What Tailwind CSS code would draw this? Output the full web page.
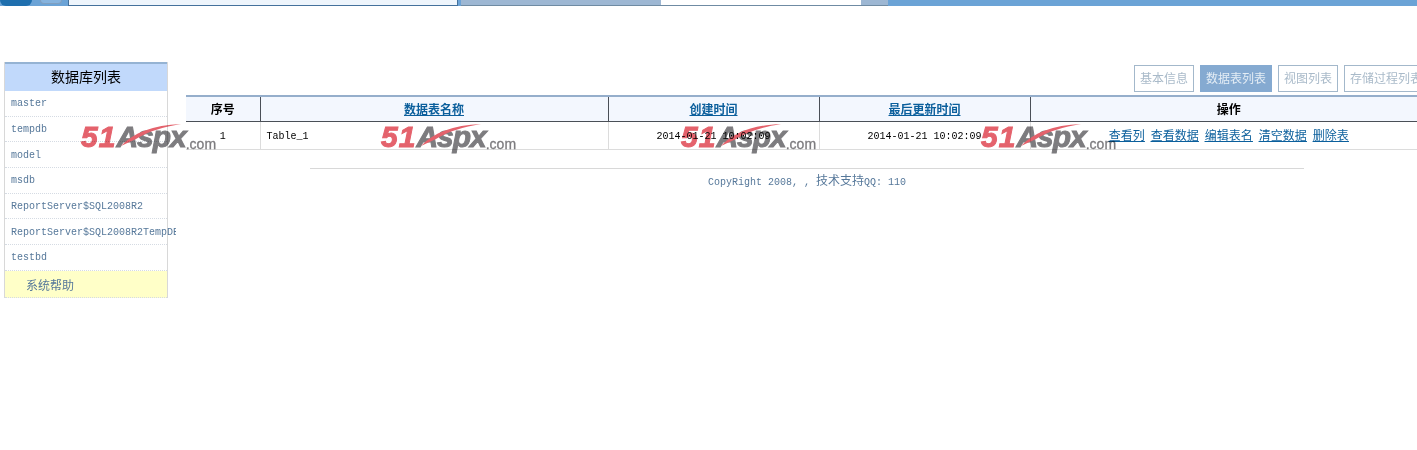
<!DOCTYPE html>
<html lang="zh">
<head>
    <meta charset="UTF-8">
    <title>数据表列表</title>
    <script src="https://cdn.jsdelivr.net/npm/@tailwindcss/browser@4"></script>
</head>
<body class="relative h-[450px] overflow-hidden bg-white font-['Liberation_Mono','Noto_Sans_CJK_SC',monospace] text-[10px]">

    <!-- browser chrome strip cut off at the top -->
    <div class="flex h-[6px] bg-[#6ba3d6]">
        <div class="w-[32px] rounded-b-[14px] bg-[#1f6fae]"></div>
        <div class="ml-[8px] h-[4px] w-[22px] rounded-b-full border-x border-b border-[#7f9fc0] bg-[#85b3de]"></div>
        <div class="ml-[6px] w-[390px] border-x border-b border-[#44719c] bg-[#eef5fc]"></div>
        <div class="ml-[3px] w-[200px] border-b border-[#6f8ba3] bg-[#9db7d3]"></div>
        <div class="w-[200px] border-b border-[#6f8ba3] bg-white"></div>
        <div class="w-[27px] border-b border-[#6f8ba3] bg-[#9db7d3]"></div>
    </div>

    <div class="flex pt-[56px]">
        <!-- left menu -->
        <div class="ml-[4px] w-[164px] shrink-0 border-x border-[#d8d8d8]">
            <div class="flex h-[29px] items-center justify-center border-t-[2px] border-[#95b3d3] bg-[#c1d9fb] pb-[2px] text-[14px] text-black font-['Noto_Sans_CJK_SC',sans-serif]">数据库列表</div>
            <div class="flex h-[25.67px] items-center whitespace-nowrap border-b border-dotted border-[#d5dbe3] pl-[6px] pt-[1px] text-[#56789a]">master</div>
            <div class="flex h-[25.67px] items-center whitespace-nowrap border-b border-dotted border-[#d5dbe3] pl-[6px] pt-[1px] text-[#56789a]">tempdb</div>
            <div class="flex h-[25.67px] items-center whitespace-nowrap border-b border-dotted border-[#d5dbe3] pl-[6px] pt-[1px] text-[#56789a]">model</div>
            <div class="flex h-[25.67px] items-center whitespace-nowrap border-b border-dotted border-[#d5dbe3] pl-[6px] pt-[1px] text-[#56789a]">msdb</div>
            <div class="flex h-[25.67px] items-center whitespace-nowrap border-b border-dotted border-[#d5dbe3] pl-[6px] pt-[1px] text-[#56789a]">ReportServer$SQL2008R2</div>
            <div class="flex h-[25.67px] items-center border-b border-dotted border-[#d5dbe3] pl-[6px] pt-[1px] text-[#56789a]">
                <span class="w-[165px] shrink-0 overflow-hidden whitespace-nowrap">ReportServer$SQL2008R2TempDB</span>
            </div>
            <div class="flex h-[25.67px] items-center whitespace-nowrap border-b border-dotted border-[#d5dbe3] pl-[6px] pt-[1px] text-[#56789a]">testbd</div>
            <div class="flex h-[27px] items-center border-b border-dotted border-[#d5dbe3] bg-[#ffffc8] pl-[21px] pt-[2px] text-[12px] text-[#56789a] font-['Noto_Sans_CJK_SC',sans-serif]">系统帮助</div>
        </div>

        <!-- main column -->
        <div class="ml-[18px] min-w-0 flex-1">
            <div class="flex h-[33px] w-[1300px] gap-[6px] pl-[948px] pt-[3px] text-[12px] text-[#a9bac9] font-['Noto_Sans_CJK_SC',sans-serif]">
                <span class="flex h-[27px] w-[60px] shrink-0 items-center justify-center border border-[#a3b8cb] pb-[2px]">基本信息</span>
                <span class="flex h-[27px] w-[72px] shrink-0 items-center justify-center bg-[#85aad1] pb-[2px] text-[#e4edf5]">数据表列表</span>
                <span class="flex h-[27px] w-[60px] shrink-0 items-center justify-center border border-[#a3b8cb] pb-[2px]">视图列表</span>
                <span class="flex h-[27px] w-[84px] shrink-0 items-center justify-center border border-[#a3b8cb] pb-[2px]">存储过程列表</span>
            </div>
            <table class="w-[1241px] table-fixed border-collapse text-black">
                <thead>
                    <tr class="h-[25px] border-t-[2px] border-b border-t-[#95aecb] border-b-[#4a4f57] bg-[#f3f7fe] text-[12px] font-bold font-['Noto_Sans_CJK_SC',sans-serif]">
                        <th class="w-[74px]">序号</th>
                        <th class="w-[348px] border-l border-[#4a4f57] text-[#0b5f9c] underline">数据表名称</th>
                        <th class="w-[211px] border-l border-[#4a4f57] text-[#0b5f9c] underline">创建时间</th>
                        <th class="w-[211px] border-l border-[#4a4f57] text-[#0b5f9c] underline">最后更新时间</th>
                        <th class="border-l border-[#4a4f57]">操作</th>
                    </tr>
                </thead>
                <tbody>
                    <tr class="h-[28px] border-b border-[#dcdcdc]">
                        <td class="pt-[3px] text-center">1</td>
                        <td class="border-l border-[#dcdcdc] pl-[6px] pt-[3px]">Table_1</td>
                        <td class="border-l border-[#dcdcdc] pt-[3px] text-center">2014-01-21 10:02:09</td>
                        <td class="border-l border-[#dcdcdc] pt-[3px] text-center">2014-01-21 10:02:09</td>
                        <td class="border-l border-[#dcdcdc] text-center text-[12px] text-[#0b5f9c] font-['Noto_Sans_CJK_SC',sans-serif]">
                            <span class="flex justify-center gap-[6px] underline"><a>查看列</a><a>查看数据</a><a>编辑表名</a><a>清空数据</a><a>删除表</a></span>
                        </td>
                    </tr>
                </tbody>
            </table>
            <div class="ml-[124px] mt-[18px] w-[994px] border-t border-[#d8d8d8] pt-[2px] text-center text-[#56789a]">CopyRight 2008, , <span class="text-[12px] font-['Noto_Sans_CJK_SC',sans-serif]">技术支持</span>QQ: 110</div>
        </div>
    </div>

    <!-- 51Aspx watermarks sit over the content -->
    <div class="pointer-events-none absolute left-[81px] top-[122px] flex h-[30px] w-[137px] items-end font-['Liberation_Sans',sans-serif] font-bold italic mix-blend-multiply [-webkit-text-stroke:1px]">
        <span class="text-[30px] leading-[30px] tracking-[1px] text-[#e4626c]">51</span><span class="text-[30px] leading-[30px] tracking-[-1px] text-[#7d7c7f]">Aspx</span><span class="mb-[1px] text-[14px] font-normal not-italic leading-none text-[#7d7c7f] [-webkit-text-stroke:0.3px]">.com</span>
        <svg class="absolute left-[38px] top-[1px]" width="64" height="24" viewBox="0 0 64 24"><path d="M2 23C14 10 34 2 62 1 44 4 30 8 17 16Z" fill="#e4626c"/></svg>
    </div>
    <div class="pointer-events-none absolute left-[381px] top-[122px] flex h-[30px] w-[137px] items-end font-['Liberation_Sans',sans-serif] font-bold italic mix-blend-multiply [-webkit-text-stroke:1px]">
        <span class="text-[30px] leading-[30px] tracking-[1px] text-[#e4626c]">51</span><span class="text-[30px] leading-[30px] tracking-[-1px] text-[#7d7c7f]">Aspx</span><span class="mb-[1px] text-[14px] font-normal not-italic leading-none text-[#7d7c7f] [-webkit-text-stroke:0.3px]">.com</span>
        <svg class="absolute left-[38px] top-[1px]" width="64" height="24" viewBox="0 0 64 24"><path d="M2 23C14 10 34 2 62 1 44 4 30 8 17 16Z" fill="#e4626c"/></svg>
    </div>
    <div class="pointer-events-none absolute left-[681px] top-[122px] flex h-[30px] w-[137px] items-end font-['Liberation_Sans',sans-serif] font-bold italic mix-blend-multiply [-webkit-text-stroke:1px]">
        <span class="text-[30px] leading-[30px] tracking-[1px] text-[#e4626c]">51</span><span class="text-[30px] leading-[30px] tracking-[-1px] text-[#7d7c7f]">Aspx</span><span class="mb-[1px] text-[14px] font-normal not-italic leading-none text-[#7d7c7f] [-webkit-text-stroke:0.3px]">.com</span>
        <svg class="absolute left-[38px] top-[1px]" width="64" height="24" viewBox="0 0 64 24"><path d="M2 23C14 10 34 2 62 1 44 4 30 8 17 16Z" fill="#e4626c"/></svg>
    </div>
    <div class="pointer-events-none absolute left-[981px] top-[122px] flex h-[30px] w-[137px] items-end font-['Liberation_Sans',sans-serif] font-bold italic mix-blend-multiply [-webkit-text-stroke:1px]">
        <span class="text-[30px] leading-[30px] tracking-[1px] text-[#e4626c]">51</span><span class="text-[30px] leading-[30px] tracking-[-1px] text-[#7d7c7f]">Aspx</span><span class="mb-[1px] text-[14px] font-normal not-italic leading-none text-[#7d7c7f] [-webkit-text-stroke:0.3px]">.com</span>
        <svg class="absolute left-[38px] top-[1px]" width="64" height="24" viewBox="0 0 64 24"><path d="M2 23C14 10 34 2 62 1 44 4 30 8 17 16Z" fill="#e4626c"/></svg>
    </div>

</body>
</html>
